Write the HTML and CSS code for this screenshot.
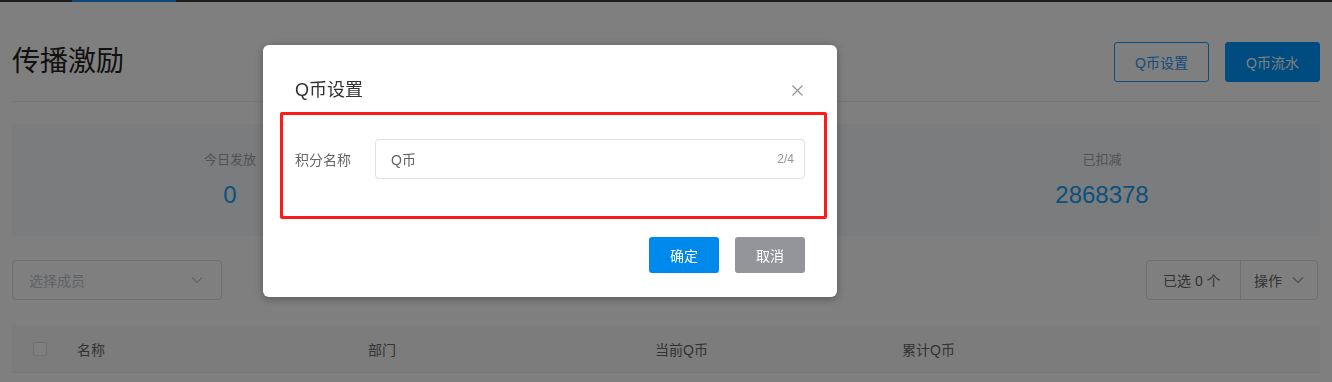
FILE: index.html
```html
<!DOCTYPE html>
<html>
<head>
    <meta charset="UTF-8">
    <meta name="viewport" content="width=device-width, initial-scale=1">
    <title>传播激励</title>
    <link rel="stylesheet" href="styles.css">
</head>
<body>
    <div class="topbar"><span class="topbar-active"></span></div>
    <div class="page">
        <div class="header">
            <h1 class="title">传播激励</h1>
            <div class="header-actions">
                <button class="btn btn-outline">Q币设置</button>
                <button class="btn btn-primary">Q币流水</button>
            </div>
        </div>

        <div class="stats">
            <div class="stat">
                <div class="stat-label">今日发放</div>
                <div class="stat-value">0</div>
            </div>
            <div class="stat">
                <div class="stat-label">累计发放</div>
                <div class="stat-value">5120460</div>
            </div>
            <div class="stat">
                <div class="stat-label">已扣减</div>
                <div class="stat-value">2868378</div>
            </div>
        </div>

        <div class="filters">
            <div class="select">
                <span class="select-placeholder">选择成员</span>
                <svg class="chevron" width="12" height="8" viewBox="0 0 12 8"><polyline points="1,1.5 6,6.5 11,1.5" fill="none" stroke="currentColor" stroke-width="1.1"/></svg>
            </div>
            <div class="btn-group">
                <div class="btn-group-item">已选 0 个</div>
                <div class="btn-group-item">操作
                    <svg class="chevron" width="12" height="8" viewBox="0 0 12 8"><polyline points="1,1.5 6,6.5 11,1.5" fill="none" stroke="currentColor" stroke-width="1.1"/></svg>
                </div>
            </div>
        </div>

        <div class="table-head">
            <div class="cell cell-check"><span class="checkbox"></span></div>
            <div class="cell">名称</div>
            <div class="cell">部门</div>
            <div class="cell">当前Q币</div>
            <div class="cell">累计Q币</div>
        </div>
    </div>

    <div class="mask"></div>

    <div class="dialog">
        <div class="dialog-header">
            <span class="dialog-title">Q币设置</span>
            <svg class="dialog-close" width="11" height="11" viewBox="0 0 11 11"><path d="M0.5 0.5 L10.5 10.5 M10.5 0.5 L0.5 10.5" stroke="currentColor" stroke-width="1.2"/></svg>
        </div>
        <div class="dialog-body">
            <div class="highlight">
                <div class="form-item">
                    <label class="form-label">积分名称</label>
                    <div class="input">
                        <span class="input-text">Q币</span>
                        <span class="input-count">2/4</span>
                    </div>
                </div>
            </div>
        </div>
        <div class="dialog-footer">
            <button class="dbtn dbtn-ok">确定</button>
            <button class="dbtn dbtn-cancel">取消</button>
        </div>
    </div>
</body>
</html>
```

FILE: styles.css
```css
* {
    box-sizing: border-box;
}
body {
    margin: 0;
    height: 382px;
    overflow: hidden;
    background-color: #fff;
    font-family: "Liberation Sans", "Noto Sans CJK SC", sans-serif;
    color: #333;
}
.topbar {
    height: 2px;
    background-color: #38383f;
    padding-left: 72px;
}
.topbar-active {
    display: block;
    width: 104px;
    height: 2px;
    background-color: #1a8cf0;
}
.page {
    padding: 0 12px;
}
.header {
    display: flex;
    justify-content: space-between;
    align-items: center;
    height: 80px;
    margin-top: 20px;
    border-bottom: 1px solid #eeeeee;
}
.title {
    margin: 0;
    font-size: 28px;
    font-weight: normal;
    color: #222;
    line-height: 40px;
}
.header-actions {
    display: flex;
    gap: 16px;
}
.btn {
    width: 95px;
    height: 40px;
    font-family: inherit;
    font-size: 14px;
    border-radius: 3px;
    cursor: pointer;
}
.btn-outline {
    background-color: #fff;
    color: #1f9aff;
    border: 1px solid #1a98ff;
}
.btn-primary {
    background-color: #0096ff;
    color: #fff;
    border: 1px solid #0096ff;
}
.stats {
    display: grid;
    grid-template-columns: repeat(3, 1fr);
    height: 112px;
    margin-top: 22px;
    padding-top: 26px;
    background-color: #f6f8fa;
}
.stat {
    text-align: center;
}
.stat-label {
    font-size: 13px;
    line-height: 20px;
    color: #a4a4a4;
}
.stat-value {
    margin-top: 10px;
    font-size: 24px;
    line-height: 30px;
    color: #16a2fa;
}
.filters {
    display: flex;
    justify-content: space-between;
    margin-top: 24px;
}
.select {
    display: flex;
    justify-content: space-between;
    align-items: center;
    width: 210px;
    height: 40px;
    padding: 0 18px 0 16px;
    border: 1px solid #dcdfe6;
    border-radius: 4px;
    font-size: 14px;
}
.select-placeholder {
    color: #c0c4cc;
}
.chevron {
    color: #c0c4cc;
}
.btn-group {
    display: flex;
    height: 40px;
    margin-right: 2px;
    border: 1px solid #dcdfe6;
    border-radius: 4px;
    font-size: 14px;
    color: #666;
}
.btn-group-item {
    display: flex;
    align-items: center;
    gap: 10px;
    padding: 0 16px;
}
.btn-group-item:first-child {
    width: 93px;
}
.btn-group-item + .btn-group-item {
    border-left: 1px solid #dcdfe6;
    padding: 0 13px 0 13px;
}
.btn-group-item .chevron {
    color: #999;
}
.table-head {
    display: grid;
    grid-template-columns: 65px 291px 287px 247px 1fr;
    align-items: center;
    height: 48px;
    margin-top: 25px;
    background-color: #f8f8f8;
    border-bottom: 1px solid #eeeeee;
    font-size: 14px;
    color: #666;
}
.cell-check {
    padding-left: 21px;
    display: flex;
}
.checkbox {
    width: 14px;
    height: 14px;
    border: 1px solid #dcdfe6;
    border-radius: 2px;
    background-color: #fff;
}
.mask {
    position: fixed;
    top: 0;
    left: 0;
    right: 0;
    bottom: 0;
    background-color: rgba(0, 0, 0, 0.5);
}
.dialog {
    position: absolute;
    top: 45px;
    left: 263px;
    width: 574px;
    background-color: #fff;
    border-radius: 6px;
    box-shadow: 0 2px 8px rgba(0, 0, 0, 0.3);
}
.dialog-header {
    display: flex;
    justify-content: space-between;
    align-items: center;
    height: 67px;
    padding: 33px 34px 10px 32px;
}
.dialog-title {
    font-size: 18px;
    line-height: 24px;
    color: #303133;
}
.dialog-close {
    color: #909399;
}
.dialog-body {
    padding: 0 10px 0 17px;
}
.highlight {
    height: 107px;
    padding: 24px 19px 0 12px;
    border: 3px solid #ff1a1a;
    border-radius: 2px;
}
.form-item {
    display: flex;
    align-items: center;
}
.form-label {
    width: 80px;
    font-size: 14px;
    color: #666;
}
.input {
    display: flex;
    justify-content: space-between;
    align-items: center;
    flex: 1;
    height: 40px;
    padding: 0 10px 0 15px;
    border: 1px solid #dcdfe6;
    border-radius: 4px;
}
.input-text {
    font-size: 14px;
    color: #606266;
}
.input-count {
    font-size: 12px;
    color: #909399;
}
.dialog-footer {
    display: flex;
    justify-content: flex-end;
    gap: 16px;
    margin-top: 18px;
    padding: 0 32px 24px;
}
.dbtn {
    width: 70px;
    height: 36px;
    border: none;
    border-radius: 3px;
    font-family: inherit;
    font-size: 14px;
    color: #fff;
    cursor: pointer;
}
.dbtn-ok {
    background-color: #0089ec;
}
.dbtn-cancel {
    background-color: #93959b;
}
```
